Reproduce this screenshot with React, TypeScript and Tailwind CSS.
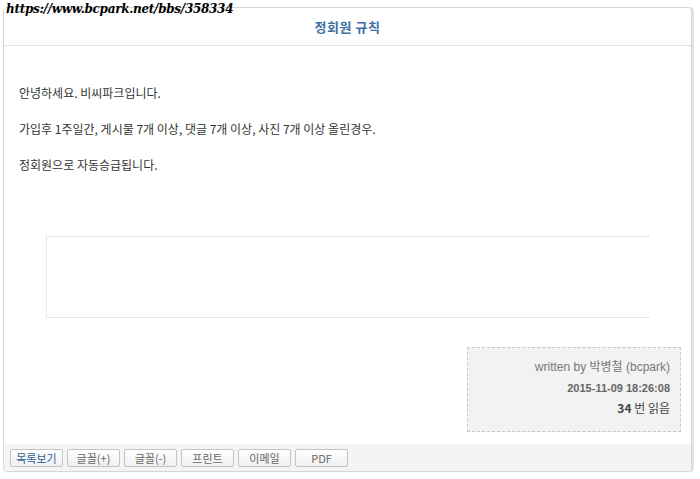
import { Fragment } from 'react';

const KR = "font-['Noto_Sans_CJK_KR',sans-serif]";

const buttons = ['목록보기', '글꼴(+)', '글꼴(-)', '프린트', '이메일', 'PDF'];

const lines = [
    '안녕하세요. 비씨파크입니다.',
    '가입후 1주일간, 게시물 7개 이상, 댓글 7개 이상, 사진 7개 이상 올린경우.',
    '정회원으로 자동승급됩니다.',
];

export default function App() {
    return (
        <div className={`relative w-[700px] h-[479px] bg-white ${KR}`}>
            {/* url stamp over the card edge */}
            <div className="absolute left-[6px] top-[2px] z-10 text-[12px] leading-[14px] italic font-bold text-black font-['DejaVu_Serif',serif] tracking-[-0.3px]">
                https://www.bcpark.net/bbs/358334
            </div>

            <div className="pt-[7px] pl-[3px]">
                <div className="w-[689px] h-[465px] flex flex-col rounded-[4px] border border-[#d6d6d6] shadow-[2px_0_0_#e4e4e4] bg-white overflow-hidden">
                    {/* title */}
                    <div className="h-[38px] flex items-center justify-center border-b border-dotted border-[#c8c8c8]">
                        <span className="text-[13px] font-bold text-[#3b6fa6] tracking-[0.5px]">정회원 규칙</span>
                    </div>

                    {/* body */}
                    <div className="flex-1 flex flex-col pl-[15px] pr-[10px] pt-[39px]">
                        <div className="flex flex-col gap-[20px] text-[12px] leading-[16px] text-[#333]">
                            {lines.map((l, i) => (
                                <Fragment key={i}>
                                    <p>{l}</p>
                                </Fragment>
                            ))}
                        </div>

                        <div className="ml-[27px] mt-[63px] w-[603px] h-[82px] border-t border-b border-l border-dotted border-[#cfcfcf]" />

                        <div className="flex justify-end mt-[29px]">
                            <div className="w-[214px] h-[85px] bg-[#f2f2f2] border border-dashed border-[#c8c8c8] flex flex-col items-end pr-[10px] pt-[11px] text-[#666]">
                                <div className="text-[12px] leading-[16px] text-[#777] font-['Liberation_Sans','Noto_Sans_CJK_KR',sans-serif]">written by 박병철 (bcpark)</div>
                                <div className="mt-[6px] text-[11px] leading-[14px] font-bold font-['Liberation_Sans',sans-serif]">2015-11-09 18:26:08</div>
                                <div className="mt-[5px] text-[12px] leading-[16px] text-[#444]">
                                    <span className="font-bold">34</span> 번 읽음
                                </div>
                            </div>
                        </div>
                    </div>

                    {/* toolbar */}
                    <div className="h-[27px] bg-[#f4f4f4] flex items-center gap-[4px] pl-[6px]">
                        {buttons.map((b, i) => (
                            <button
                                key={b}
                                className={`w-[53px] h-[18px] border border-[#c4c4c4] rounded-[2px] bg-gradient-to-b from-white to-[#f0f0f0] text-[11px] leading-[16px] ${i === 0 ? 'text-[#2d5f95]' : 'text-[#666]'}`}
                            >
                                {b}
                            </button>
                        ))}
                    </div>
                </div>
            </div>
        </div>
    );
}
